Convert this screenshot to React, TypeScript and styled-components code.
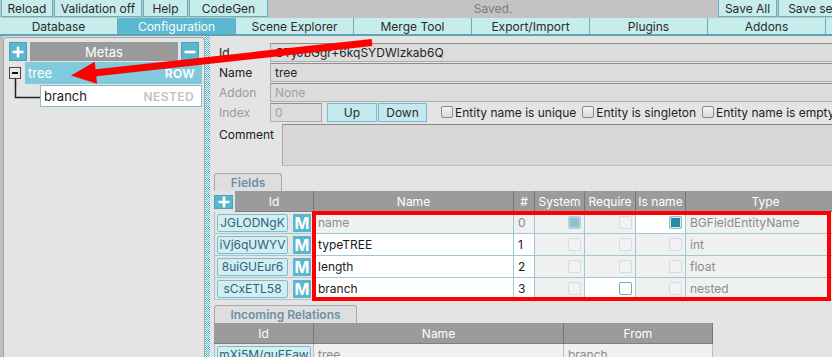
import React, { FC } from "react";
import styled, { createGlobalStyle, css } from "styled-components";

const GlobalStyle = createGlobalStyle`
	html, body {
		margin: 0;
		padding: 0;
	}

	body {
		font-family: Inter, "Noto Sans", "Liberation Sans", sans-serif;
		font-size: 12px;
		color: #222;
		background: #e4e4e4;
	}

	*, *::before, *::after {
		box-sizing: border-box;
	}
`;

const TEAL = '#5ab6ce';
const LINE = '#9ec8d2';

const Page = styled.div`
	position: relative;
	width: 832px;
	height: 357px;
	overflow: hidden;
	background: #e4e4e4;
`;

/* ---------- top bars ---------- */

const TopBar = styled.div`
	display: flex;
	gap: 1px;
	width: 874px;
	height: 18px;
	padding-left: 1px;
	background: #c3c3c3;
`;

const ToolButton = styled.div<{ $w: number }>`
	flex: 0 0 ${p => p.$w}px;
	display: flex;
	align-items: center;
	justify-content: center;
	height: 17px;
	background: #c6ecec;
	border: 1px solid #68b0c0;
	border-top: none;
	color: #2a2a2a;
	white-space: nowrap;
	overflow: hidden;
`;

const Status = styled.div`
	flex: 1;
	text-align: center;
	line-height: 17px;
	color: #7b7b7b;
`;

const TabBar = styled.div`
	display: flex;
	width: 950px;
	height: 18px;
	background: #c3c3c3;
`;

const Tab = styled.div<{ $active?: boolean }>`
	flex: 0 0 118px;
	display: flex;
	align-items: center;
	justify-content: center;
	background: ${p => p.$active ? '#5ab8d0' : '#c6ecec'};
	color: ${p => p.$active ? '#fff' : '#2a2a2a'};
	border-right: 1px solid #6aacbd;
	border-bottom: 2px solid #5fa3b4;
`;

/* ---------- layout ---------- */

const Main = styled.div`
	display: flex;
	height: 321px;
`;

const LeftPanel = styled.div`
	flex: 0 0 205px;
	display: flex;
	padding-top: 1px;
	border-left: 3px solid #bdbdbd;
`;

const MetaBox = styled.div`
	flex: 1;
	padding: 4px 5px;
	border: 1px solid #a4a4a4;
	border-bottom: none;
	border-radius: 3px 3px 0 0;
`;

const Splitter = styled.div`
	flex: 0 0 5px;
	background: repeating-conic-gradient(#42b2cd 0 25%, #ffffff 0 50%) 0 0 / 2px 2px;
`;

const RightPanel = styled.div`
	flex: 1;
	min-width: 0;
	padding-top: 6px;
	overflow: hidden;
`;

/* ---------- metas tree ---------- */

const MetasHeader = styled.div`
	display: flex;
	gap: 3px;
	height: 19px;
`;

const IconButton = styled.div<{ $w?: number }>`
	flex: 0 0 ${p => p.$w ?? 18}px;
	display: flex;
	align-items: center;
	justify-content: center;
	background: ${TEAL};
	border: 1px solid #4aa3bb;
`;

const HeaderTitle = styled.div`
	flex: 1;
	display: flex;
	align-items: center;
	justify-content: center;
	background: #9a9a9a;
	color: #fff;
	font-size: 13px;
`;

const TreeList = styled.div`
	display: flex;
	flex-direction: column;
	gap: 1px;
	margin: 1px -3px 0 0;
`;

const TreeLine = styled.div`
	display: flex;
	height: 22px;
`;

const Gutter = styled.div<{ $w: number }>`
	flex: 0 0 ${p => p.$w}px;

	svg {
		display: block;
		overflow: visible;
	}
`;

const Node = styled.div<{ $selected?: boolean }>`
	flex: 1;
	display: flex;
	align-items: center;
	justify-content: space-between;
	padding: 0 7px 0 3px;
	font-size: 13px;
	${p => p.$selected
		? css`
			background: #80cadc;
			color: #fff;
		`
		: css`
			background: #fff;
			border: 1px solid #7fbfcd;
			color: #1c1c1c;
		`}
`;

const NodeKind = styled.span<{ $selected?: boolean }>`
	font-size: 12px;
	font-weight: 600;
	letter-spacing: 0.4px;
	color: ${p => p.$selected ? '#fff' : '#c3c3c3'};
`;

/* ---------- form ---------- */

const FormRow = styled.div`
	display: grid;
	grid-template-columns: 51px 1fr;
	align-items: center;
	height: 20px;
	padding-left: 9px;
	margin-right: -20px;
`;

const Label = styled.div<{ $muted?: boolean; $top?: number }>`
	color: ${p => p.$muted ? '#9a9a9a' : '#202020'};
	padding-top: ${p => p.$top ?? 0}px;
`;

const TextInput = styled.div<{ $w?: number; $muted?: boolean }>`
	height: 19px;
	${p => p.$w && css`width: ${p.$w}px;`}
	padding: 0 4px;
	line-height: 17px;
	background: #dcdcdc;
	border: 1px solid #acacac;
	border-top-color: #8e8e8e;
	color: ${p => p.$muted ? '#a2a2a2' : '#262626'};
	white-space: nowrap;
	overflow: hidden;
`;

const Controls = styled.div`
	display: flex;
	align-items: center;
`;

const SmallButton = styled.div<{ $w: number; $gap?: number }>`
	width: ${p => p.$w}px;
	height: 19px;
	margin-left: ${p => p.$gap ?? 0}px;
	display: flex;
	align-items: center;
	justify-content: center;
	background: #c3e9ee;
	border: 1px solid #74bccc;
	color: #2a2a2a;
`;

const Option = styled.label<{ $gap: number }>`
	display: flex;
	align-items: center;
	gap: 2px;
	margin-left: ${p => p.$gap}px;
	white-space: nowrap;
	color: #1e1e1e;
`;

const OptionBox = styled.span`
	width: 12px;
	height: 12px;
	border: 1px solid #8a8a8a;
	border-radius: 2px;
	background: linear-gradient(#f4f4f4, #d9d9d9);
`;

const CommentRow = styled.div`
	display: grid;
	grid-template-columns: 63px 1fr;
	height: 42px;
	margin: 2px -20px 0 0;
	padding-left: 9px;
`;

const CommentBox = styled.div`
	background: #d7d7d7;
	border-top: 1px solid #8a8a8a;
	border-left: 1px solid #a8a8a8;
	border-bottom: 1px solid #bcbcbc;
`;

/* ---------- tables ---------- */

const Section = styled.div<{ $top: number }>`
	margin-top: ${p => p.$top}px;
	padding-left: 4px;
`;

const SectionTab = styled.div<{ $w: number }>`
	width: ${p => p.$w}px;
	height: 18px;
	display: flex;
	align-items: center;
	justify-content: center;
	background: #dedede;
	border: 1px solid #a9a9a9;
	border-bottom: none;
	border-radius: 3px 3px 0 0;
	color: #6a91a6;
	font-weight: 600;
`;

const Grid = styled.div<{ $cols: string }>`
	display: grid;
	grid-template-columns: ${p => p.$cols};
	justify-content: start;
`;

const HeadCell = styled.div<{ $bare?: boolean }>`
	height: 21px;
	display: flex;
	align-items: center;
	justify-content: center;
	color: #fff;
	white-space: nowrap;
	overflow: hidden;
	${p => p.$bare
		? css`gap: 2px; justify-content: flex-start;`
		: css`
			background: #9b9b9b;
			border-right: 1px solid #767676;
			border-bottom: 1px solid #7e7e7e;
		`}
`;

const SubHead = styled.div`
	flex: 1;
	height: 100%;
	display: flex;
	align-items: center;
	justify-content: center;
	background: #9b9b9b;
	border-right: 1px solid #767676;
	border-bottom: 1px solid #7e7e7e;
`;

type CellTone = 'plain' | 'white' | 'soft';

const Cell = styled.div<{ $tone?: CellTone; $muted?: boolean; $end?: boolean; $first?: boolean }>`
	height: 22px;
	display: flex;
	align-items: center;
	justify-content: ${p => p.$end ? 'flex-end' : 'flex-start'};
	gap: 5px;
	padding: 0 ${p => p.$end ? '3px' : '4px'};
	white-space: nowrap;
	overflow: hidden;
	border-right: 1px solid ${LINE};
	border-bottom: 1px solid ${LINE};
	${p => p.$first && css`border-left: 1px solid ${LINE}; padding-left: 2px;`}
	background: ${p => p.$tone === 'white' ? '#fff' : p.$tone === 'plain' ? '#e6e6e6' : '#f0f0f0'};
	color: ${p => p.$muted ? '#8c8c8c' : '#1a1a1a'};
`;

const IdButton = styled.div<{ $w: number }>`
	flex: 0 0 ${p => p.$w}px;
	height: 18px;
	display: flex;
	align-items: center;
	justify-content: center;
	overflow: hidden;
	white-space: nowrap;
	background: #d2eef2;
	border: 1px solid #7cbdcb;
	border-radius: 2px;
	color: #2f6379;
`;

const MButton = styled.div`
	flex: 0 0 18px;
	height: 18px;
	display: flex;
	align-items: center;
	justify-content: center;
	background: ${TEAL};
	color: #fff;
	font-weight: 700;
	font-size: 16px;
`;

type BoxState = 'off' | 'offChecked' | 'on' | 'open';

const boxStyles: Record<BoxState, ReturnType<typeof css>> = {
	off: css`
		border: 1px solid #cfe0e5;
		background: #f2f2f2;
	`,
	offChecked: css`
		border: 1px solid #aacfd9;
		background: #8fbfcd;
		box-shadow: inset 0 0 0 1px #b6d8e1;
	`,
	on: css`
		border: 1px solid #86c1d0;
		background: #2f89a1;
		box-shadow: inset 0 0 0 1px #d4ecf1;
	`,
	open: css`
		border: 1px solid #62b2c4;
		background: #fff;
	`,
};

const CellBox = styled.span<{ $state: BoxState }>`
	width: 13px;
	height: 13px;
	border-radius: 2px;
	${p => boxStyles[p.$state]}
`;

/* ---------- overlay annotations ---------- */

const Annotations = styled.svg`
	position: absolute;
	inset: 0;
	pointer-events: none;
`;

/* ---------- data ---------- */

const tabs = ['Database', 'Configuration', 'Scene Explorer', 'Merge Tool', 'Export/Import', 'Plugins', 'Addons', 'Settings'];

interface FieldRow {
	id: string;
	name: string;
	index: number;
	system: BoxState;
	require: BoxState;
	isName: BoxState;
	type: string;
	locked?: boolean;
}

const fields: FieldRow[] = [
	{ id: 'JGLODNgK', name: 'name', index: 0, system: 'offChecked', require: 'off', isName: 'on', type: 'BGFieldEntityName', locked: true },
	{ id: 'iVj6qUWYV', name: 'typeTREE', index: 1, system: 'off', require: 'off', isName: 'off', type: 'int' },
	{ id: '8uiGUEur6', name: 'length', index: 2, system: 'off', require: 'off', isName: 'off', type: 'float' },
	{ id: 'sCxETL58', name: 'branch', index: 3, system: 'off', require: 'open', isName: 'off', type: 'nested' },
];

const PlusIcon: FC<{ size?: number }> = ({ size = 12 }) => (
	<svg width={size} height={size} viewBox="0 0 12 12">
		<path d="M6 0.5V11.5M0.5 6H11.5" stroke="#fff" strokeWidth="2.6" />
	</svg>
);

const MinusIcon: FC = () => (
	<svg width={12} height={12} viewBox="0 0 12 12">
		<path d="M0.5 6H11.5" stroke="#fff" strokeWidth="2.6" />
	</svg>
);

const App: FC = () => (
	<Page>
		<GlobalStyle />

		<TopBar>
			<ToolButton $w={52}>Reload</ToolButton>
			<ToolButton $w={88}>Validation off</ToolButton>
			<ToolButton $w={45}>Help</ToolButton>
			<ToolButton $w={79}>CodeGen</ToolButton>
			<Status>Saved.</Status>
			<ToolButton $w={59}>Save All</ToolButton>
			<ToolButton $w={96}>Save settings</ToolButton>
		</TopBar>

		<TabBar>
			{tabs.map(t => <Tab key={t} $active={t === 'Configuration'}>{t}</Tab>)}
		</TabBar>

		<Main>
			<LeftPanel>
				<MetaBox>
					<MetasHeader>
						<IconButton><PlusIcon /></IconButton>
						<HeaderTitle>Metas</HeaderTitle>
						<IconButton><MinusIcon /></IconButton>
					</MetasHeader>

					<TreeList>
						<TreeLine>
							<Gutter $w={16}>
								<svg width={16} height={22}>
									<rect x="0.5" y="5.5" width="11" height="11" fill="#e9e9e9" stroke="#474747" />
									<path d="M3 11H9" stroke="#111" strokeWidth="2" />
									<path d="M6.5 16.5V23" stroke="#222" strokeWidth="1.5" />
								</svg>
							</Gutter>
							<Node $selected>
								<span>tree</span>
								<NodeKind $selected>ROW</NodeKind>
							</Node>
						</TreeLine>
						<TreeLine>
							<Gutter $w={31}>
								<svg width={31} height={22}>
									<path d="M6.5 -1V12.5H31" fill="none" stroke="#222" strokeWidth="1.5" />
								</svg>
							</Gutter>
							<Node>
								<span>branch</span>
								<NodeKind>NESTED</NodeKind>
							</Node>
						</TreeLine>
					</TreeList>
				</MetaBox>
			</LeftPanel>

			<Splitter />

			<RightPanel>
				<FormRow>
					<Label>Id</Label>
					<TextInput>OTyJbGgr+6kqSYDWlzkab6Q</TextInput>
				</FormRow>
				<FormRow>
					<Label>Name</Label>
					<TextInput>tree</TextInput>
				</FormRow>
				<FormRow>
					<Label $muted>Addon</Label>
					<TextInput $muted>None</TextInput>
				</FormRow>
				<FormRow>
					<Label $muted>Index</Label>
					<Controls>
						<TextInput $w={52} $muted>0</TextInput>
						<SmallButton $w={50} $gap={5}>Up</SmallButton>
						<SmallButton $w={49} $gap={1}>Down</SmallButton>
						<Option $gap={14}><OptionBox />Entity name is unique</Option>
						<Option $gap={6}><OptionBox />Entity is singleton</Option>
						<Option $gap={6}><OptionBox />Entity name is empty</Option>
					</Controls>
				</FormRow>
				<CommentRow>
					<Label $top={3}>Comment</Label>
					<CommentBox />
				</CommentRow>

				<Section $top={7}>
					<SectionTab $w={68}>Fields</SectionTab>
					<Grid $cols="100px 200px 21px 50px 51px 50px 160px">
						<HeadCell $bare>
							<IconButton $w={19}><PlusIcon /></IconButton>
							<SubHead>Id</SubHead>
						</HeadCell>
						<HeadCell>Name</HeadCell>
						<HeadCell>#</HeadCell>
						<HeadCell>System</HeadCell>
						<HeadCell>Require</HeadCell>
						<HeadCell>Is name</HeadCell>
						<HeadCell>Type</HeadCell>

						{fields.map(f => (
							<React.Fragment key={f.id}>
								<Cell $tone="plain" $first>
									<IdButton $w={71}>{f.id}</IdButton>
									<MButton>M</MButton>
								</Cell>
								<Cell $tone={f.locked ? 'soft' : 'white'} $muted={f.locked}>{f.name}</Cell>
								<Cell $tone={f.locked ? 'soft' : 'white'} $muted={f.locked}>{f.index}</Cell>
								<Cell $end><CellBox $state={f.system} /></Cell>
								<Cell $end $tone={f.require === 'open' ? 'white' : 'soft'}><CellBox $state={f.require} /></Cell>
								<Cell $end $tone={f.isName === 'on' ? 'white' : 'soft'}><CellBox $state={f.isName} /></Cell>
								<Cell $muted>{f.type}</Cell>
							</React.Fragment>
						))}
					</Grid>
				</Section>

				<Section $top={5}>
					<SectionTab $w={143}>Incoming Relations</SectionTab>
					<Grid $cols="100px 250px 149px">
						<HeadCell>Id</HeadCell>
						<HeadCell>Name</HeadCell>
						<HeadCell>From</HeadCell>

						<Cell $tone="plain" $first>
							<IdButton $w={94}>mXj5M/guFEaw</IdButton>
						</Cell>
						<Cell $muted>tree</Cell>
						<Cell $muted>branch</Cell>
					</Grid>
				</Section>
			</RightPanel>
		</Main>

		<Annotations width={832} height={357} viewBox="0 0 832 357">
			<rect x="314" y="213" width="515" height="86" fill="none" stroke="#ff0000" strokeWidth="4" />
			<line x1="372" y1="42.4" x2="94" y2="73" stroke="#ff0000" strokeWidth="7" />
			<polygon points="71,75.5 94.7,61.8 97.1,83.7" fill="#ff0000" />
		</Annotations>
	</Page>
);

export default App;
